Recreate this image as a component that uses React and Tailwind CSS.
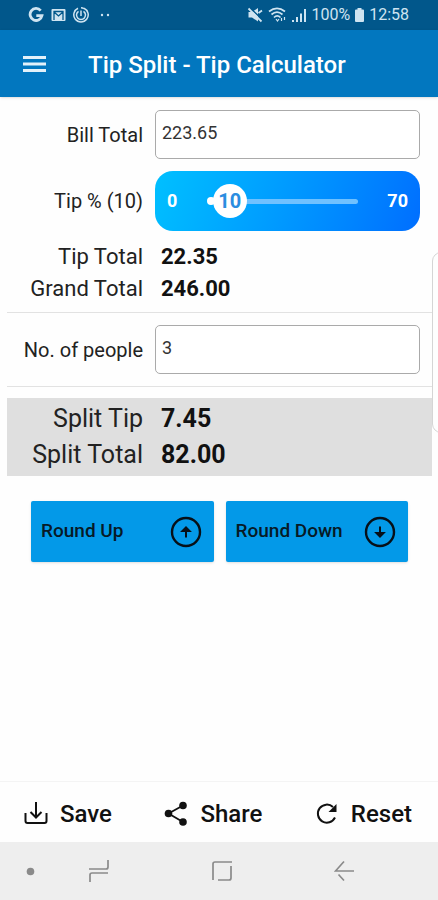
import { useState } from "react";

const MAX_TIP = 70;

function StatusBar() {
  return (
    <div className="flex h-[30px] items-center justify-between bg-[#01578b] pr-[29px] pl-7 text-[#cfe4f1]">
      <div className="flex items-center gap-[7px]">
        <svg width="16" height="16" viewBox="0 0 16 16" fill="none" stroke="currentColor" strokeWidth="2.8">
          <path d="M12.7 3.6A6 6 0 1 0 14 8.6H8.3" />
        </svg>
        <svg width="15" height="14" viewBox="0 0 15 14">
          <rect x="0.5" y="1" width="14" height="12" rx="1" fill="currentColor" />
          <path d="M3 12V4l4.500 4L12 4v8M3 3.500h9" fill="none" stroke="#01578b" strokeWidth="1.300" />
        </svg>
        <svg width="16" height="16" viewBox="0 0 16 16" fill="none" stroke="currentColor" strokeWidth="1.500">
          <path d="M5 1.300A7.200 7.200 0 1 0 11 1.300" />
          <path d="M8 .8a7 7 0 0 1 3 .8M5.500 4.300a4.500 4.500 0 1 0 5 0M8 3.500v5.500" />
        </svg>
        <svg width="16" height="4" viewBox="0 0 16 4" fill="currentColor">
          <circle cx="6" cy="2" r="1.200" />
          <circle cx="12" cy="2" r="1.200" />
        </svg>
      </div>
      <div className="flex items-center gap-1 text-base">
        <svg width="17" height="16" viewBox="0 0 17 16" fill="currentColor">
          <path d="M1.500 5h3.500L11 1v13.500L5 10.500H1.500z" />
          <path d="M3 1 16 13" stroke="#01578b" strokeWidth="1.500" />
          <path d="M1.500 1.500 14.500 14.500M11.500 6l3.500-2.500" stroke="currentColor" strokeWidth="1.800" />
        </svg>
        <svg width="19" height="16" viewBox="0 0 19 16" fill="none" stroke="currentColor" strokeWidth="1.700">
          <path d="M1 4.500c5-4 11-4 16 0M3.500 7.500c3.500-3 7.500-3 11 0M6 10.500c2-2 4.500-2 6.500 0" />
          <path d="m8 12 1.500 2 1.500-2M13.500 11v3M16.500 10v3" strokeWidth="1.200" />
        </svg>
        <svg width="16" height="15" viewBox="0 0 16 15" fill="currentColor">
          <path d="M1 12h2v2H1zM5 9h2v5H5zM9 5.500h2V14H9zM13 1h2v13h-2z" />
        </svg>
        <span>100%</span>
        <svg width="11" height="16" viewBox="0 0 11 16" fill="currentColor">
          <path d="M3.500 1h4v1.500H9a1 1 0 0 1 1 1V14a1 1 0 0 1-1 1H2a1 1 0 0 1-1-1V3.500a1 1 0 0 1 1-1h1.500z" />
        </svg>
        <span>12:58</span>
      </div>
    </div>
  );
}

function Field({ id, label, value, onChange }) {
  return (
    <div className="flex items-center gap-3 pr-3">
      <label htmlFor={id} className="w-[136px] shrink-0 text-right text-xl text-[#222]">
        {label}
      </label>
      <input
        id={id}
        inputMode="decimal"
        value={value}
        onChange={(e) => onChange(e.target.value)}
        className="h-[49px] min-w-0 flex-1 rounded-[5px] border border-[#aaa] bg-white px-[6px] pb-1 text-lg text-[#333] outline-none"
      />
    </div>
  );
}

function TipSlider({ value, onChange }) {
  return (
    <div className="flex items-center gap-3 pr-3">
      <label htmlFor="tip" className="w-[136px] shrink-0 text-right text-xl text-[#222]">
        Tip % ({value})
      </label>
      <div className="flex h-[60px] min-w-0 flex-1 items-center justify-between rounded-[18px] bg-linear-110 from-[#00c0ff] to-[#006eff] px-3 text-lg font-bold text-white">
        <span>0</span>
        <div className="relative mr-3 ml-[14px] grid flex-1 items-center">
          <div className="col-start-1 row-start-1 mx-[17px] h-[5px] rounded-full bg-[#6fc1ff]" />
          <input
            id="tip"
            type="range"
            min="0"
            max={MAX_TIP}
            value={value}
            onChange={(e) => onChange(Number(e.target.value))}
            className="relative col-start-1 row-start-1 h-[34px] w-full min-w-0 appearance-none bg-transparent outline-none [&::-webkit-slider-thumb]:size-[34px] [&::-webkit-slider-thumb]:appearance-none [&::-webkit-slider-thumb]:rounded-full [&::-webkit-slider-thumb]:bg-white"
          />
          <span className="absolute left-5 size-2 -translate-x-1/2 rounded-full bg-white" />
          <output
            htmlFor="tip"
            className="pointer-events-none absolute -translate-x-1/2 text-xl text-[#2b8de0]"
            style={{ left: `calc(17px + (100% - 34px) * ${value / MAX_TIP})` }}
          >
            {value}
          </output>
        </div>
        <span>{MAX_TIP}</span>
      </div>
    </div>
  );
}

function Total({ label, value }) {
  return (
    <div className="flex gap-[18px]">
      <dt className="w-[136px] shrink-0 text-right">{label}</dt>
      <dd className="font-bold text-[#111]">{value}</dd>
    </div>
  );
}

function RoundButton({ label, up, onClick }) {
  return (
    <button
      type="button"
      onClick={onClick}
      className="flex h-[61px] flex-1 items-center justify-between rounded-xs bg-[#0399e8] pr-3 pl-[10px] text-[19px] font-medium text-[#071a26] shadow"
    >
      {label}
      <svg width="32" height="32" viewBox="0 0 32 32" fill="none" stroke="#071018" strokeWidth="2.400">
        <circle cx="16" cy="16" r="14" />
        {up ? (
          <path d="M16 21.500v-8M12.500 15 16 11.500l3.500 3.500z" fill="#071018" strokeWidth="2" />
        ) : (
          <path d="M16 10.500v8M12.500 17 16 20.500l3.500-3.500z" fill="#071018" strokeWidth="2" />
        )}
      </svg>
    </button>
  );
}

function FooterButton({ label, onClick, children }) {
  return (
    <button type="button" onClick={onClick} className="flex items-center gap-3 text-2xl font-medium text-[#111]">
      <svg width="24" height="26" viewBox="0 0 24 26" fill="none" stroke="#111" strokeWidth="2">
        {children}
      </svg>
      {label}
    </button>
  );
}

export default function App() {
  const [bill, setBill] = useState("223.65");
  const [tip, setTip] = useState(10);
  const [people, setPeople] = useState("3");
  const [roundUp, setRoundUp] = useState(false);

  const amount = Number(bill) || 0;
  const count = Math.max(1, Number(people) || 1);
  const share = (amount * (1 + tip / 100)) / count;
  const splitTotal = roundUp ? Math.ceil(share) : Math.floor(share);
  const grandTotal = splitTotal * count;
  const tipTotal = grandTotal - amount;

  const reset = () => {
    setBill("");
    setTip(10);
    setPeople("1");
  };

  return (
    <div className="relative flex min-h-screen flex-col overflow-hidden bg-[#fefefe] font-[Roboto,sans-serif]">
      <StatusBar />
      <header className="flex h-[67px] items-center bg-[#0277bf] pl-[23px] text-white shadow">
        <button type="button" aria-label="Menu">
          <svg width="23" height="16" viewBox="0 0 23 16" fill="#e2f1fa">
            <path d="M0 0h23v3H0zM0 6.500h23v3H0zM0 13h23v3H0z" />
          </svg>
        </button>
        <h1 className="ml-[42px] pt-[2px] text-2xl font-medium">Tip Split - Tip Calculator</h1>
      </header>

      <main className="flex flex-col pt-[13px] pr-[6px] pl-[7px]">
        <Field id="bill" label="Bill Total" value={bill} onChange={setBill} />
        <div className="pt-3">
          <TipSlider value={tip} onChange={setTip} />
        </div>
        <dl className="pt-[10px] pb-[7px] text-[22px] leading-8 text-[#222]">
          <Total label="Tip Total" value={tipTotal.toFixed(2)} />
          <Total label="Grand Total" value={grandTotal.toFixed(2)} />
        </dl>
        <div className="border-y border-[#e2e2e2] py-3">
          <Field id="people" label="No. of people" value={people} onChange={setPeople} />
        </div>
        <dl className="mt-[11px] bg-[#dfdfdf] py-[3px] text-[25px] leading-9 text-[#222]">
          <Total label="Split Tip" value={(tipTotal / count).toFixed(2)} />
          <Total label="Split Total" value={splitTotal.toFixed(2)} />
        </dl>
        <div className="flex gap-3 px-6 pt-[25px]">
          <RoundButton label="Round Up" up onClick={() => setRoundUp(true)} />
          <RoundButton label="Round Down" onClick={() => setRoundUp(false)} />
        </div>
      </main>

      <div className="absolute top-[252px] -right-3 h-[181px] w-[18px] rounded-[10px] border border-[#d5d5d5] bg-[#fefefe]" />

      <footer className="mt-auto">
        <div className="flex h-[61px] items-center justify-between border-t border-[#f4f4f4] pt-1 pr-[26px] pl-6">
          <FooterButton label="Save">
            <path d="M12 1v15M6.500 11l5.500 5.500 5.500-5.500M1.500 12v8q0 2 2 2h17q2 0 2-2v-8" />
          </FooterButton>
          <FooterButton label="Share">
            <path d="M19 4.500 4.500 12.500 19 21" strokeWidth="1.800" />
            <g fill="#111" stroke="none">
              <circle cx="19" cy="4.500" r="3.800" />
              <circle cx="4.500" cy="12.500" r="3.800" />
              <circle cx="19" cy="21" r="3.800" />
            </g>
          </FooterButton>
          <FooterButton label="Reset" onClick={reset}>
            <path d="M20 16.500A9 9 0 1 1 18 6" strokeWidth="2" />
            <path d="M21.500 3v8h-8z" fill="#111" stroke="none" />
          </FooterButton>
        </div>
        <nav className="flex h-[58px] items-center justify-between bg-[#eee] pr-[84px] pl-[26px]">
          <svg width="9" height="9" viewBox="0 0 9 9">
            <circle cx="4.500" cy="4.500" r="3.800" fill="#8a8a8a" />
          </svg>
          <div className="flex w-[266px] items-center justify-between">
            <button type="button" aria-label="Recent apps">
              <svg width="22" height="24" viewBox="0 0 22 24" fill="none" stroke="#8a8a8a" strokeWidth="1.700">
                <path d="M1 10h17q2 0 2-2V1M20 14H4q-2 0-2 2v7" />
              </svg>
            </button>
            <button type="button" aria-label="Home">
              <svg width="22" height="22" viewBox="0 0 22 22" fill="none" stroke="#8a8a8a" strokeWidth="1.700">
                <path d="M21 2H4Q2 2 2 4v16M7 20h11q2 0 2-2V6" />
              </svg>
            </button>
            <button type="button" aria-label="Back">
              <svg width="20" height="22" viewBox="0 0 20 22" fill="none" stroke="#8a8a8a" strokeWidth="1.700">
                <path d="M10 1.500 1.500 11H20M4.500 14.500 10 20.500" />
              </svg>
            </button>
          </div>
        </nav>
      </footer>
    </div>
  );
}
